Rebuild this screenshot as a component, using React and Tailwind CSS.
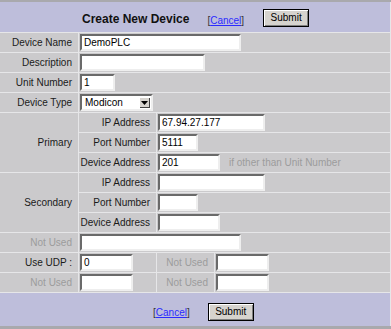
import React from 'react';

const font = "font-['Liberation_Sans',Arial,sans-serif]";
const cell = 'bg-[#cbcacc] flex items-center';
const label = `${cell} justify-end pr-[6px] text-[10px] text-[#1a1a1a]`;
const dimLabel = `${cell} justify-end pr-[6px] text-[10px] text-[#9c9c9c]`;
const field = `${cell} pl-px`;

function Box({ w, value = '' }) {
  return (
    <div
      className={`${w} h-[17px] bg-white border-2 border-t-[#6a6a6a] border-l-[#6a6a6a] border-r-[#eeeeee] border-b-[#eeeeee] text-[10px] text-black pl-[2px] leading-[13px] whitespace-nowrap overflow-hidden`}
    >
      {value}
    </div>
  );
}

function Submit() {
  return (
    <button className="w-[46px] h-[18px] bg-[#d6d3ce] border border-black shadow-[inset_1px_1px_0_#ffffff,inset_-1px_-1px_0_#808080] text-[10px] text-black leading-none">
      Submit
    </button>
  );
}

function Cancel() {
  return (
    <span className="text-[10px] text-[#333]">
      [<a href="#" className="text-[#2b2bff] underline">Cancel</a>]
    </span>
  );
}

export default function App() {
  return (
    <div className={`${font} w-[391px] h-[329px] bg-[#a9a9ad] pt-[2px] pb-[3px] flex flex-col`}>
      <div className="bg-[#e6e6e8] pr-px flex flex-col gap-px">
        {/* Header */}
        <div className="h-[30px] bg-[#bebedb] flex items-center pl-[82px]">
          <span className="text-[12px] font-bold text-[#111] mt-[3px]">Create New Device</span>
          <span className="ml-[18px] mt-[4px]">
            <Cancel />
          </span>
          <span className="ml-[19px] mb-[2px]">
            <Submit />
          </span>
        </div>

        {/* Body */}
        <div className="grid grid-cols-[78px_77px_57px_1fr] auto-rows-[19px] gap-px">
          <div className={label}>Device Name</div>
          <div className={`${field} col-span-3`}>
            <Box w="w-[161px]" value="DemoPLC" />
          </div>

          <div className={label}>Description</div>
          <div className={`${field} col-span-3`}>
            <Box w="w-[125px]" />
          </div>

          <div className={label}>Unit Number</div>
          <div className={`${field} col-span-3`}>
            <Box w="w-[35px]" value="1" />
          </div>

          <div className={label}>Device Type</div>
          <div className={`${field} col-span-3`}>
            <div className="w-[73px] h-[17px] bg-white border-2 border-t-[#6a6a6a] border-l-[#6a6a6a] border-r-[#eeeeee] border-b-[#eeeeee] flex items-center justify-between">
              <span className="text-[10px] text-black pl-[3px]">Modicon</span>
              <span className="w-[11px] h-[11px] mr-px bg-[#d6d3ce] shadow-[inset_1px_1px_0_#ffffff,inset_-1px_-1px_0_#404040] flex items-center justify-center">
                <svg width="7" height="4" viewBox="0 0 7 4">
                  <path d="M0 0h7L3.5 4z" fill="#000" />
                </svg>
              </span>
            </div>
          </div>

          {/* Primary */}
          <div className={`${label} row-span-3`}>Primary</div>
          <div className={label}>IP Address</div>
          <div className={`${field} col-span-2`}>
            <Box w="w-[107px]" value="67.94.27.177" />
          </div>
          <div className={label}>Port Number</div>
          <div className={`${field} col-span-2`}>
            <Box w="w-[40px]" value="5111" />
          </div>
          <div className={label}>Device Address</div>
          <div className={`${field} col-span-2`}>
            <Box w="w-[62px]" value="201" />
            <span className="ml-[9px] text-[10px] text-[#9c9c9c] whitespace-nowrap">if other than Unit Number</span>
          </div>

          {/* Secondary */}
          <div className={`${label} row-span-3`}>Secondary</div>
          <div className={label}>IP Address</div>
          <div className={`${field} col-span-2`}>
            <Box w="w-[107px]" />
          </div>
          <div className={label}>Port Number</div>
          <div className={`${field} col-span-2`}>
            <Box w="w-[40px]" />
          </div>
          <div className={label}>Device Address</div>
          <div className={`${field} col-span-2`}>
            <Box w="w-[62px]" />
          </div>

          <div className={dimLabel}>Not Used</div>
          <div className={`${field} col-span-3`}>
            <Box w="w-[161px]" />
          </div>

          <div className={label}>Use UDP :</div>
          <div className={field}>
            <Box w="w-[53px]" value="0" />
          </div>
          <div className={dimLabel}>Not Used</div>
          <div className={field}>
            <Box w="w-[53px]" />
          </div>

          <div className={dimLabel}>Not Used</div>
          <div className={field}>
            <Box w="w-[53px]" />
          </div>
          <div className={dimLabel}>Not Used</div>
          <div className={field}>
            <Box w="w-[53px]" />
          </div>
        </div>

        {/* Footer */}
        <div className="h-[33px] bg-[#bebedb] flex items-center pl-[153px]">
          <span className="mt-[2px]">
            <Cancel />
          </span>
          <span className="ml-[18px]">
            <Submit />
          </span>
        </div>
      </div>
    </div>
  );
}
